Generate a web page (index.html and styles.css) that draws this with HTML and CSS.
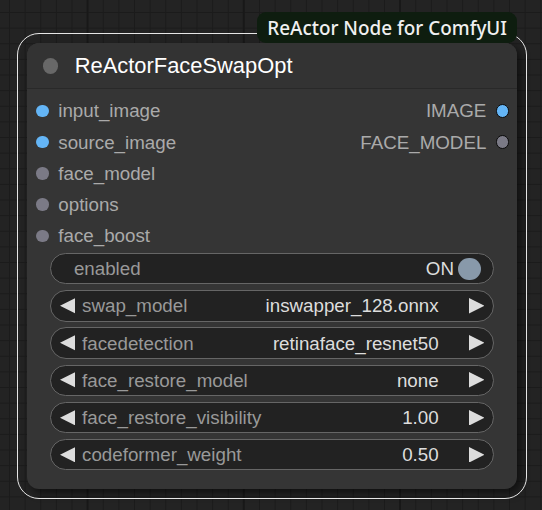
FILE: index.html
```html
<!DOCTYPE html>
<html>
<head>
<meta charset="utf-8">
<link rel="stylesheet" href="styles.css">
</head>
<body>
<div class="canvas">
  <div class="node">
    <div class="badge">ReActor Node for ComfyUI</div>
    <div class="title">
      <span class="title-dot"></span>
      <span class="title-text">ReActorFaceSwapOpt</span>
    </div>
    <div class="slots">
      <div class="inputs">
        <div class="slot"><span class="dot image"></span><span class="slot-name">input_image</span></div>
        <div class="slot"><span class="dot image"></span><span class="slot-name">source_image</span></div>
        <div class="slot"><span class="dot other"></span><span class="slot-name">face_model</span></div>
        <div class="slot"><span class="dot other"></span><span class="slot-name">options</span></div>
        <div class="slot"><span class="dot other"></span><span class="slot-name">face_boost</span></div>
      </div>
      <div class="outputs">
        <div class="slot slot-out"><span class="slot-name">IMAGE</span><span class="dot image outlined"></span></div>
        <div class="slot slot-out"><span class="slot-name">FACE_MODEL</span><span class="dot other outlined"></span></div>
      </div>
    </div>
    <div class="widgets">
      <div class="widget toggle">
        <span class="label">enabled</span>
        <span class="value">ON</span>
        <span class="knob"></span>
      </div>
      <div class="widget combo">
        <svg class="arrow" viewBox="0 0 10 10"><polygon points="10,0 0,5 10,10"/></svg>
        <span class="label">swap_model</span>
        <span class="value">inswapper_128.onnx</span>
        <svg class="arrow" viewBox="0 0 10 10"><polygon points="0,0 10,5 0,10"/></svg>
      </div>
      <div class="widget combo">
        <svg class="arrow" viewBox="0 0 10 10"><polygon points="10,0 0,5 10,10"/></svg>
        <span class="label">facedetection</span>
        <span class="value">retinaface_resnet50</span>
        <svg class="arrow" viewBox="0 0 10 10"><polygon points="0,0 10,5 0,10"/></svg>
      </div>
      <div class="widget combo">
        <svg class="arrow" viewBox="0 0 10 10"><polygon points="10,0 0,5 10,10"/></svg>
        <span class="label">face_restore_model</span>
        <span class="value">none</span>
        <svg class="arrow" viewBox="0 0 10 10"><polygon points="0,0 10,5 0,10"/></svg>
      </div>
      <div class="widget combo">
        <svg class="arrow" viewBox="0 0 10 10"><polygon points="10,0 0,5 10,10"/></svg>
        <span class="label">face_restore_visibility</span>
        <span class="value">1.00</span>
        <svg class="arrow" viewBox="0 0 10 10"><polygon points="0,0 10,5 0,10"/></svg>
      </div>
      <div class="widget combo">
        <svg class="arrow" viewBox="0 0 10 10"><polygon points="10,0 0,5 10,10"/></svg>
        <span class="label">codeformer_weight</span>
        <span class="value">0.50</span>
        <svg class="arrow" viewBox="0 0 10 10"><polygon points="0,0 10,5 0,10"/></svg>
      </div>
    </div>
  </div>
</div>
</body>
</html>
```
FILE: styles.css
```css
html, body {
  margin: 0;
  padding: 0;
}

body {
  width: 542px;
  height: 510px;
  overflow: hidden;
  background-color: #232323;
  background-image:
    linear-gradient(to right, #181818 2px, transparent 2px),
    linear-gradient(to right, #1b1b1b 1px, transparent 1px),
    linear-gradient(to bottom, #1b1b1b 1px, transparent 1px);
  background-size: 156.25px 100%, 15.625px 100%, 100% 15.625px;
  background-position: 86.5px 0, 9px 0, 0 12px;
  font-family: "Liberation Sans", Arial, sans-serif;
}

.canvas {
  padding: 42.5px 0 0 27px;
}

.node {
  position: relative;
  width: 490px;
  height: 446.5px;
  box-sizing: border-box;
  background: #353535;
  border-radius: 12px;
  outline: 1.5px solid #e6e6e6;
  outline-offset: 9px;
  box-shadow: 4px 4px 8px rgba(0, 0, 0, 0.55);
}

.badge {
  position: absolute;
  right: 0;
  top: -30.5px;
  height: 31px;
  padding: 0 10px;
  box-sizing: border-box;
  display: flex;
  align-items: center;
  background: #0e1d0f;
  border-radius: 9px;
  color: #f0f0f0;
  font-family: "Noto Sans", "Open Sans", sans-serif;
  font-size: 18.9px;
  font-weight: 500;
  white-space: nowrap;
}

.title {
  height: 46.5px;
  display: flex;
  align-items: center;
  padding-left: 15.6px;
  background: #333;
  border-radius: 12px 12px 0 0;
  box-shadow: inset 0 -1px 0 rgba(0, 0, 0, 0.18);
}

.title-dot {
  width: 15.6px;
  height: 15.6px;
  border-radius: 50%;
  background: #686868;
  flex: none;
}

.title-text {
  margin-left: 16.5px;
  color: #fff;
  font-size: 21.9px;
  padding-top: 1px;
}

.slots {
  display: flex;
  justify-content: space-between;
  padding-top: 6.3px;
}

.slot {
  height: 31.25px;
  display: flex;
  align-items: center;
  color: #aaa;
  font-size: 18.75px;
}

.inputs .slot {
  padding-left: 9.4px;
}

.outputs {
  padding-right: 8px;
}

.slot-out {
  justify-content: flex-end;
}

.slot-name {
  padding-top: 1px;
}

.inputs .slot-name {
  margin-left: 9.4px;
}

.outputs .slot-name {
  margin-right: 9.2px;
}

.dot {
  width: 12.5px;
  height: 12.5px;
  border-radius: 50%;
  flex: none;
  box-sizing: border-box;
}

.dot.image {
  background: #64b5f6;
}

.dot.other {
  background: #7b7a86;
}

.dot.outlined {
  width: 13.5px;
  height: 13.5px;
  border: 1.5px solid #0a0a0a;
}

.widgets {
  display: flex;
  flex-direction: column;
  gap: 5.9px;
  padding-top: 1.6px;
}

.widget {
  height: 31.25px;
  margin: 0 23.4px;
  box-sizing: border-box;
  border: 1px solid #666;
  border-radius: 16px;
  background: #222;
  display: flex;
  align-items: center;
  font-size: 18.75px;
  white-space: nowrap;
}

.widget .label {
  color: #999;
  flex: 1;
  padding-top: 1px;
}

.widget .value {
  color: #ddd;
  padding-top: 1px;
}

.combo {
  padding: 0 8.4px 0 8.4px;
}

.combo .label {
  margin-left: 6.7px;
}

.combo .value {
  margin-right: 30px;
}

.arrow {
  width: 15.6px;
  height: 15.6px;
  flex: none;
  fill: #ddd;
}

.toggle {
  padding: 0 11.8px 0 22.5px;
}

.knob {
  width: 22.5px;
  height: 22.5px;
  border-radius: 50%;
  background: #8899aa;
  margin-left: 4.4px;
  flex: none;
}
```
